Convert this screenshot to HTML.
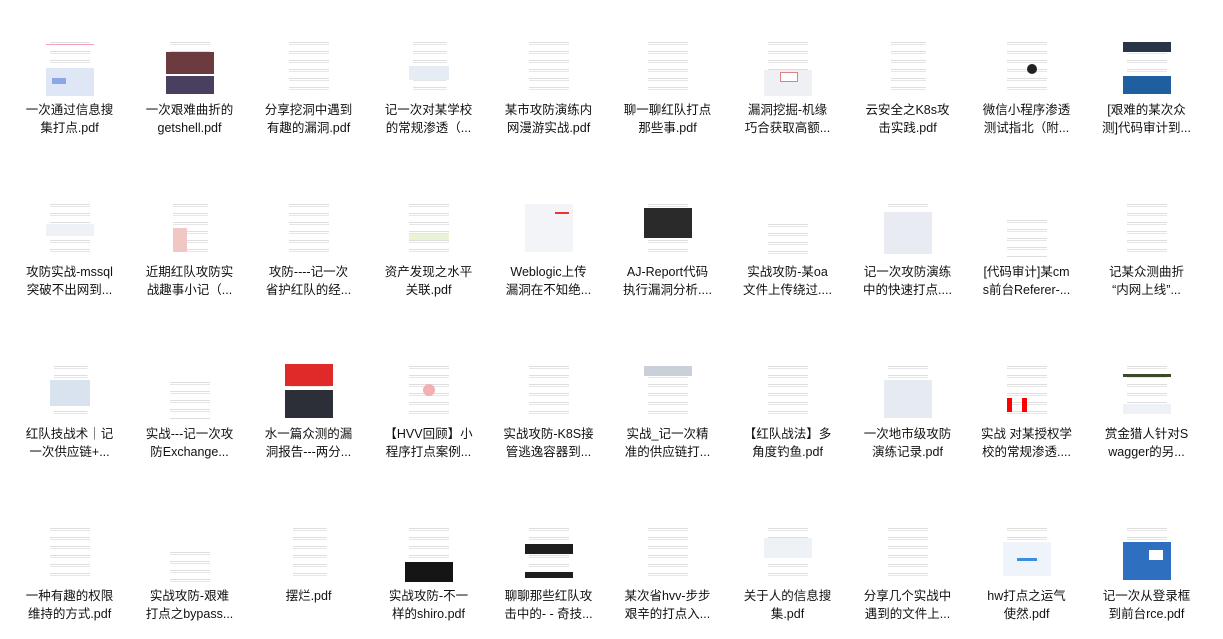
<!DOCTYPE html>
<html><head><meta charset="utf-8"><style>
html,body{margin:0;padding:0;background:#fff;width:1223px;height:639px;overflow:hidden;position:relative}
.c{position:absolute;width:119px;text-align:center}
.t{position:absolute;left:0;right:0;top:34px;height:62px;display:flex;justify-content:center;align-items:flex-end}
.pg{width:48px;height:60px;background:#fff;position:relative;overflow:hidden;
 background-image:repeating-linear-gradient(to bottom,#fff 0,#fff 3px,#dedede 3px,#dedede 4px,#fff 4px,#fff 5px,#e6e6e6 5px,#e6e6e6 6px,#fff 6px,#fff 9px);
 background-size:84% 100%;background-repeat:no-repeat;background-position:4px 3px}
.b{position:absolute;left:0;right:0}
.l{position:absolute;top:101px;left:-4px;right:-4px;font-family:"Liberation Sans","Noto Sans CJK SC",sans-serif;font-size:12.5px;line-height:18px;color:#111;white-space:nowrap}
</style></head><body>

<!-- row 1 -->
<div class="c" style="left:10px;top:0"><div class="t"><div class="pg"><div class="b" style="top:8px;height:1px;background:#f4a0b8"></div><div class="b" style="top:32px;bottom:0;background:#dfe6f5"></div><div class="b" style="top:42px;left:6px;width:14px;height:6px;background:#8ca6e6"></div></div></div><div class="l">一次通过信息搜<br>集打点.pdf</div></div>
<div class="c" style="left:130px;top:0"><div class="t"><div class="pg"><div class="b" style="top:16px;height:22px;background:#6b3b3f"></div><div class="b" style="top:40px;bottom:2px;background:#4a3f5e"></div></div></div><div class="l">一次艰难曲折的<br>getshell.pdf</div></div>
<div class="c" style="left:249px;top:0"><div class="t"><div class="pg"></div></div><div class="l">分享挖洞中遇到<br>有趣的漏洞.pdf</div></div>
<div class="c" style="left:369px;top:0"><div class="t"><div class="pg" style="width:40px"><div class="b" style="top:30px;height:14px;background:#e6ecf3"></div></div></div><div class="l">记一次对某学校<br>的常规渗透（...</div></div>
<div class="c" style="left:489px;top:0"><div class="t"><div class="pg"></div></div><div class="l">某市攻防演练内<br>网漫游实战.pdf</div></div>
<div class="c" style="left:608px;top:0"><div class="t"><div class="pg"></div></div><div class="l">聊一聊红队打点<br>那些事.pdf</div></div>
<div class="c" style="left:728px;top:0"><div class="t"><div class="pg"><div class="b" style="top:34px;bottom:0;background:#eef0f3"></div><div class="b" style="top:36px;height:8px;left:16px;right:14px;border:1px solid #e08080;background:#fff"></div></div></div><div class="l">漏洞挖掘-机缘<br>巧合获取高额...</div></div>
<div class="c" style="left:848px;top:0"><div class="t"><div class="pg" style="width:42px"></div></div><div class="l">云安全之K8s攻<br>击实践.pdf</div></div>
<div class="c" style="left:967px;top:0"><div class="t"><div class="pg"><div class="b" style="top:28px;left:24px;width:10px;height:10px;border-radius:5px;background:#222"></div></div></div><div class="l">微信小程序渗透<br>测试指北（附...</div></div>
<div class="c" style="left:1087px;top:0"><div class="t"><div class="pg"><div class="b" style="top:6px;height:10px;background:#2a3448"></div><div class="b" style="top:40px;bottom:2px;background:#1f5fa0"></div></div></div><div class="l">[艰难的某次众<br>测]代码审计到...</div></div>

<!-- row 2 -->
<div class="c" style="left:10px;top:162px"><div class="t"><div class="pg"><div class="b" style="top:26px;height:12px;background:#eef2f7"></div></div></div><div class="l">攻防实战-mssql<br>突破不出网到...</div></div>
<div class="c" style="left:130px;top:162px"><div class="t"><div class="pg" style="width:42px"><div class="b" style="top:30px;bottom:6px;left:4px;width:14px;background:#f1c6c6"></div></div></div><div class="l">近期红队攻防实<br>战趣事小记（...</div></div>
<div class="c" style="left:249px;top:162px"><div class="t"><div class="pg"></div></div><div class="l">攻防----记一次<br>省护红队的经...</div></div>
<div class="c" style="left:369px;top:162px"><div class="t"><div class="pg"><div class="b" style="top:36px;height:6px;left:4px;right:4px;background:#e9f3d5"></div></div></div><div class="l">资产发现之水平<br>关联.pdf</div></div>
<div class="c" style="left:489px;top:162px"><div class="t"><div class="pg"><div class="b" style="top:6px;bottom:6px;background:#f2f4f7"></div><div class="b" style="top:14px;left:30px;width:14px;height:2px;background:#e33"></div></div></div><div class="l">Weblogic上传<br>漏洞在不知绝...</div></div>
<div class="c" style="left:608px;top:162px"><div class="t"><div class="pg"><div class="b" style="top:10px;height:30px;background:#2a2a2a"></div></div></div><div class="l">AJ-Report代码<br>执行漏洞分析....</div></div>
<div class="c" style="left:728px;top:162px"><div class="t"><div class="pg" style="height:40px"></div></div><div class="l">实战攻防-某oa<br>文件上传绕过....</div></div>
<div class="c" style="left:848px;top:162px"><div class="t"><div class="pg"><div class="b" style="top:14px;bottom:4px;background:#e8ecf2"></div></div></div><div class="l">记一次攻防演练<br>中的快速打点....</div></div>
<div class="c" style="left:967px;top:162px"><div class="t"><div class="pg" style="height:44px"></div></div><div class="l">[代码审计]某cm<br>s前台Referer-...</div></div>
<div class="c" style="left:1087px;top:162px"><div class="t"><div class="pg"></div></div><div class="l">记某众测曲折<br>“内网上线”...</div></div>

<!-- row 3 -->
<div class="c" style="left:10px;top:324px"><div class="t"><div class="pg" style="width:40px"><div class="b" style="top:20px;height:26px;background:#d9e3ef"></div></div></div><div class="l">红队技战术｜记<br>一次供应链+...</div></div>
<div class="c" style="left:130px;top:324px"><div class="t"><div class="pg" style="height:44px"></div></div><div class="l">实战---记一次攻<br>防Exchange...</div></div>
<div class="c" style="left:249px;top:324px"><div class="t"><div class="pg"><div class="b" style="top:4px;height:22px;background:#e02a2a"></div><div class="b" style="top:30px;bottom:2px;background:#2d2f38"></div></div></div><div class="l">水一篇众测的漏<br>洞报告---两分...</div></div>
<div class="c" style="left:369px;top:324px"><div class="t"><div class="pg"><div class="b" style="top:24px;left:18px;width:12px;height:12px;border-radius:6px;background:#f3b0b0"></div></div></div><div class="l">【HVV回顾】小<br>程序打点案例...</div></div>
<div class="c" style="left:489px;top:324px"><div class="t"><div class="pg"></div></div><div class="l">实战攻防-K8S接<br>管逃逸容器到...</div></div>
<div class="c" style="left:608px;top:324px"><div class="t"><div class="pg"><div class="b" style="top:6px;height:10px;background:#c9d0d8"></div></div></div><div class="l">实战_记一次精<br>准的供应链打...</div></div>
<div class="c" style="left:728px;top:324px"><div class="t"><div class="pg"></div></div><div class="l">【红队战法】多<br>角度钓鱼.pdf</div></div>
<div class="c" style="left:848px;top:324px"><div class="t"><div class="pg"><div class="b" style="top:20px;bottom:2px;background:#e6ebf2"></div></div></div><div class="l">一次地市级攻防<br>演练记录.pdf</div></div>
<div class="c" style="left:967px;top:324px"><div class="t"><div class="pg"><div class="b" style="top:38px;left:4px;width:5px;height:14px;background:#f00"></div><div class="b" style="top:38px;left:19px;width:5px;height:14px;background:#f00"></div></div></div><div class="l">实战 对某授权学<br>校的常规渗透....</div></div>
<div class="c" style="left:1087px;top:324px"><div class="t"><div class="pg"><div class="b" style="top:14px;height:3px;background:#3a4a2a"></div><div class="b" style="top:44px;height:10px;background:#eef1f5"></div></div></div><div class="l">赏金猎人针对S<br>wagger的另...</div></div>

<!-- row 4 -->
<div class="c" style="left:10px;top:486px"><div class="t"><div class="pg"></div></div><div class="l">一种有趣的权限<br>维持的方式.pdf</div></div>
<div class="c" style="left:130px;top:486px"><div class="t"><div class="pg" style="height:36px"></div></div><div class="l">实战攻防-艰难<br>打点之bypass...</div></div>
<div class="c" style="left:249px;top:486px"><div class="t"><div class="pg" style="width:40px"></div></div><div class="l">摆烂.pdf</div></div>
<div class="c" style="left:369px;top:486px"><div class="t"><div class="pg"><div class="b" style="top:40px;bottom:0;background:#151515"></div></div></div><div class="l">实战攻防-不一<br>样的shiro.pdf</div></div>
<div class="c" style="left:489px;top:486px"><div class="t"><div class="pg"><div class="b" style="top:22px;height:10px;background:#1e1e1e"></div><div class="b" style="top:50px;height:6px;background:#1e1e1e"></div></div></div><div class="l">聊聊那些红队攻<br>击中的- - 奇技...</div></div>
<div class="c" style="left:608px;top:486px"><div class="t"><div class="pg"></div></div><div class="l">某次省hvv-步步<br>艰辛的打点入...</div></div>
<div class="c" style="left:728px;top:486px"><div class="t"><div class="pg"><div class="b" style="top:16px;height:20px;background:#eef1f5"></div></div></div><div class="l">关于人的信息搜<br>集.pdf</div></div>
<div class="c" style="left:848px;top:486px"><div class="t"><div class="pg"></div></div><div class="l">分享几个实战中<br>遇到的文件上...</div></div>
<div class="c" style="left:967px;top:486px"><div class="t"><div class="pg"><div class="b" style="top:20px;bottom:6px;background:#eef4fa"></div><div class="b" style="top:36px;left:14px;width:20px;height:3px;background:#3b8fe0"></div></div></div><div class="l">hw打点之运气<br>使然.pdf</div></div>
<div class="c" style="left:1087px;top:486px"><div class="t"><div class="pg"><div class="b" style="top:20px;bottom:2px;background:#2f6fc0"></div><div class="b" style="top:28px;left:26px;width:14px;height:10px;background:#fff"></div></div></div><div class="l">记一次从登录框<br>到前台rce.pdf</div></div>

</body></html>
